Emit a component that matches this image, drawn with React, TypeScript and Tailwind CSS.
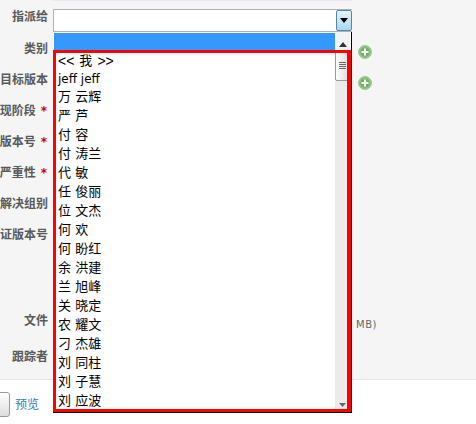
const people = ["万 云辉", "严 芦", "付 容", "付 涛兰", "代 敏", "任 俊丽", "位 文杰", "何 欢", "何 盼红", "余 洪建", "兰 旭峰", "关 晓定", "农 耀文", "刁 杰雄", "刘 同柱", "刘 子慧", "刘 应波"];

const font = { fontFamily: '"DejaVu Sans", "Noto Sans CJK SC", sans-serif' };
const arrows = { fontFamily: '"Liberation Sans", sans-serif' };

function Label({ text, required, className }: { text: string; required?: boolean; className: string }) {
  return (
    <div className={`flex w-[48px] justify-end overflow-hidden whitespace-nowrap text-[12px] font-bold leading-[16px] text-[#595959] ${className}`}>
      <span className="shrink-0">{text}</span>
      {required && <span className="ml-[5px] mr-[1px] shrink-0 text-[#c00]">*</span>}
    </div>
  );
}

function Plus() {
  return (
    <svg width="14" height="14" viewBox="0 0 14 14" className="block">
      <circle cx="7" cy="7" r="6.5" fill="#8fc385" stroke="#9ccb93" />
      <circle cx="7" cy="7" r="4.6" fill="#6fb35f" />
      <path d="M6 3.5h2V6h2.5v2H8v2.5H6V8H3.5V6H6z" fill="#fff" />
    </svg>
  );
}

export default function App() {
  return (
    <div className="relative flex h-[424px] w-[476px] flex-col overflow-hidden bg-white" style={font}>
      <div className="h-[380px] border-b border-[#e3e3e3] bg-[#f5f5f5]">
        <div className="ml-[53px] h-px w-[299px] bg-[#e6eaf0]" />
        <Label text="指派给" className="mt-[8px]" />
        <Label text="类别" className="mt-[16px]" />
        <Label text="目标版本" className="mt-[15px]" />
        <Label text="现阶段" required className="mt-[15px]" />
        <Label text="版本号" required className="mt-[15px]" />
        <Label text="严重性" required className="mt-[15px]" />
        <Label text="解决组别" className="mt-[15px]" />
        <Label text="证版本号" className="mt-[15px]" />
        <Label text="文件" className="mt-[70px]" />
        <Label text="跟踪者" className="mt-[20px]" />
      </div>
      <div className="flex items-center gap-[5px] pt-[12px]">
        <div className="ml-[-20px] h-[25px] w-[30px] rounded-[3px] border border-[#999] bg-gradient-to-b from-white to-[#ddd]" />
        <span className="text-[12px] leading-[16px] text-[#2f7fb5]">预览</span>
      </div>

      {/* open select */}
      <div className="absolute left-[53px] top-[9px] flex h-[23px] w-[299px] border border-[#b0b0b0] border-r-0 bg-white">
        <div className="flex-1" />
        <div className="flex w-[16px] items-center justify-center rounded-[2px] border border-[#4f86b3] bg-gradient-to-b from-[#e6f3fb] to-[#a9d8f2]">
          <svg width="8" height="5" viewBox="0 0 8 5"><path d="M0 0h8L4 5z" fill="#000" /></svg>
        </div>
      </div>

      {/* dropdown */}
      <div className="absolute left-[53px] top-[32px] flex h-[381px] w-[299px] flex-col border-b border-r border-black bg-white">
        <div className="ml-[1px] mr-[16px] mt-[1px] h-[17px] shrink-0 bg-[#3399ff]" />
        <div className="flex-1 overflow-hidden border-[3px] border-[#ff0000] pl-[2px]">
          <div className="mt-[-1px]">
            <div className="flex h-[18px] items-center gap-[5px] whitespace-nowrap leading-[18px] text-black">
              <span className="text-[14px]" style={arrows}>&lt;&lt;</span>
              <span className="text-[13px]">我</span>
              <span className="text-[14px]" style={arrows}>&gt;&gt;</span>
            </div>
            <div className="h-[17px] whitespace-nowrap text-[12px] leading-[18px] text-black">jeff jeff</div>
            {people.map((p) => (
              <div key={p} className="h-[19px] whitespace-nowrap text-[13px] leading-[19px] text-black">{p}</div>
            ))}
          </div>
        </div>
        {/* scrollbar, lying over the list */}
        <div className="absolute bottom-0 right-[1px] top-0 flex w-[15px] flex-col items-center bg-[#ebebeb]">
          <div className="flex h-[18px] w-full items-end justify-center bg-[#f3f3f3] pb-[3px]">
            <svg width="8" height="5" viewBox="0 0 8 5"><path d="M4 0l4 5H0z" fill="#333" /></svg>
          </div>
          <div className="flex h-[31px] w-[15px] flex-col items-center justify-center gap-[1px] rounded-[2px] border border-[#999] bg-gradient-to-r from-white to-[#ddd]">
            <div className="h-px w-[7px] bg-[#666]" />
            <div className="h-px w-[7px] bg-[#666]" />
            <div className="h-px w-[7px] bg-[#666]" />
            <div className="h-px w-[7px] bg-[#666]" />
          </div>
          <div className="flex-1" />
          <svg width="7" height="4" viewBox="0 0 7 4" className="mb-[5px]"><path d="M0 0h7L3.5 4z" fill="#666" /></svg>
        </div>
        {/* red highlight box edges that cross the scrollbar */}
        <div className="absolute right-[1px] top-[18px] h-[3px] w-[15px] bg-[#ff0000]" />
        <div className="absolute bottom-0 right-[1px] top-[18px] w-[3px] bg-[#ff0000]" />
        <div className="absolute bottom-0 left-0 right-[1px] h-[3px] bg-[#ff0000]" />
      </div>

      <div className="absolute left-[358px] top-[45px]"><Plus /></div>
      <div className="absolute left-[358px] top-[76px]"><Plus /></div>
      <div className="absolute left-[356px] top-[318px] text-[10px] leading-[14px] tracking-[0.5px] text-[#666]">MB)</div>
    </div>
  );
}
